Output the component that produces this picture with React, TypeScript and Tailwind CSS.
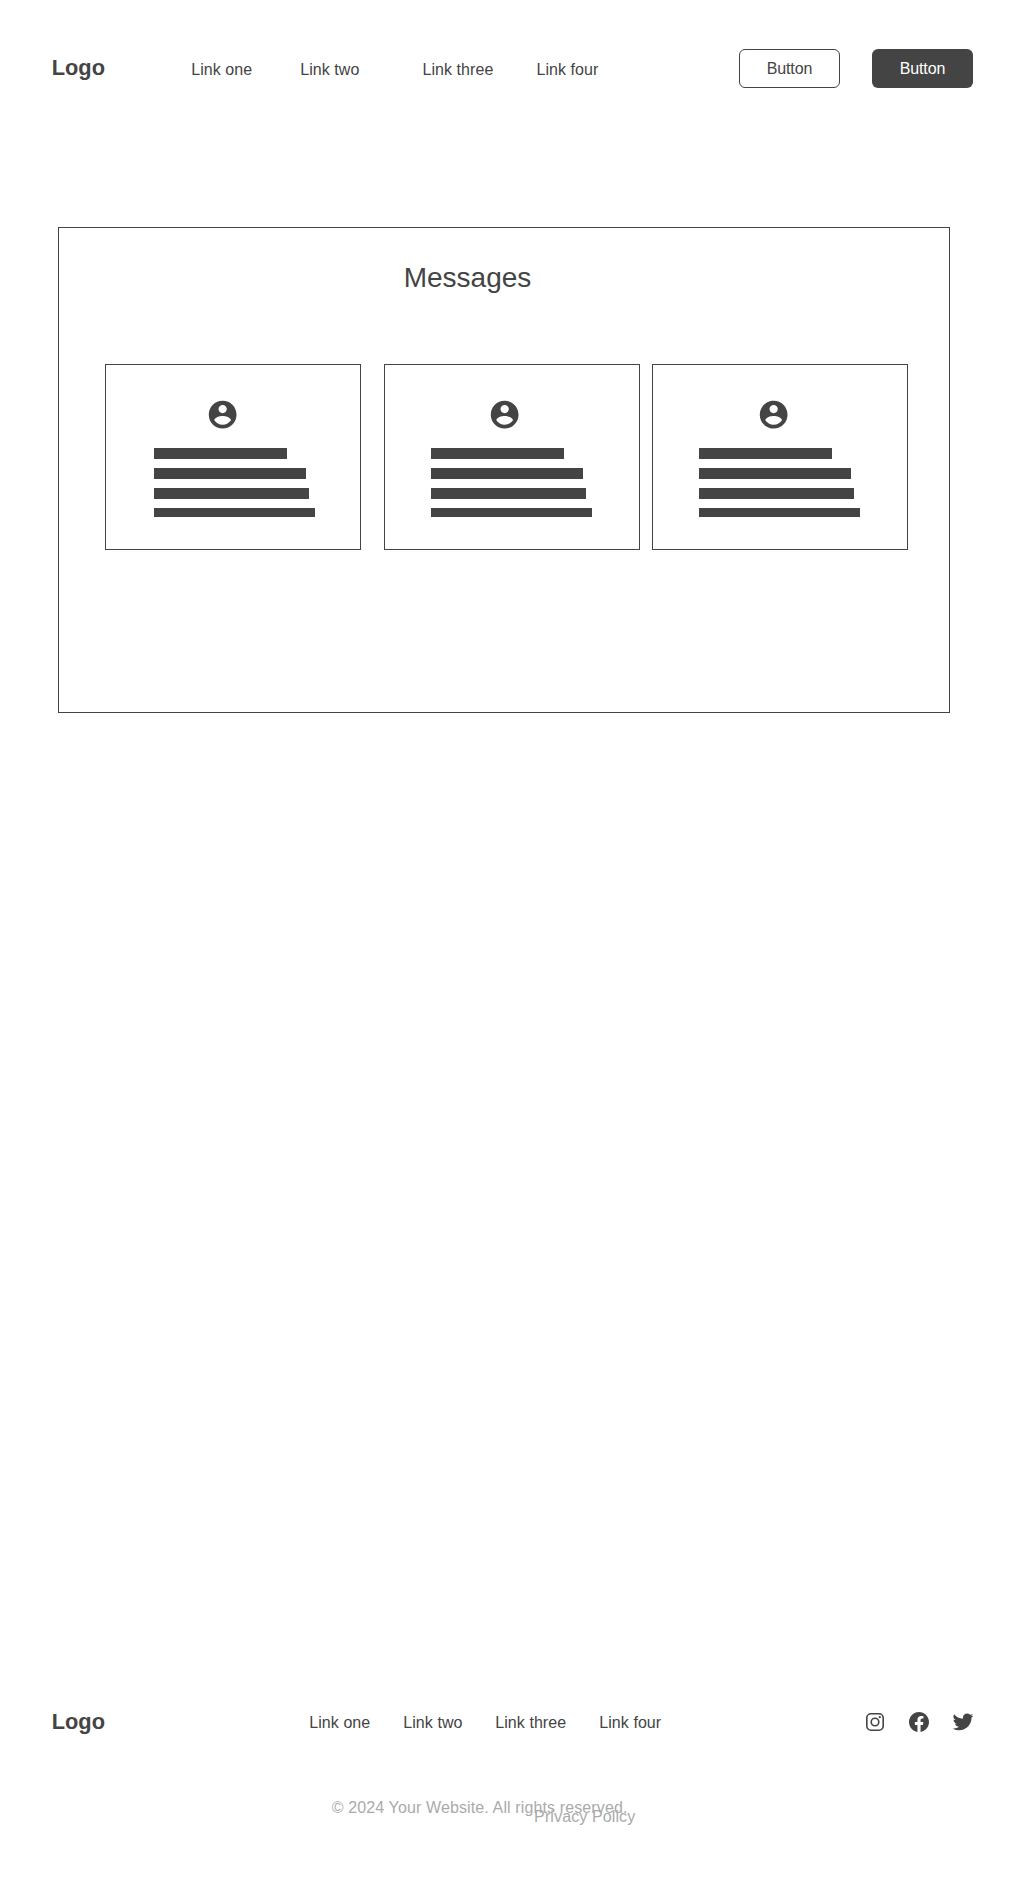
import React from "react";

function Avatar({ className }: { className: string }) {
  return (
    <svg viewBox="0 0 24 24" fill="currentColor" className={`size-[33.3px] ${className}`}>
      <path d="M12 2C6.48 2 2 6.48 2 12s4.48 10 10 10 10-4.48 10-10S17.52 2 12 2zm0 3c1.66 0 3 1.34 3 3s-1.34 3-3 3-3-1.34-3-3 1.34-3 3-3zm0 14.2c-2.5 0-4.71-1.28-6-3.22.03-1.99 4-3.08 6-3.08 1.99 0 5.97 1.09 6 3.08-1.29 1.94-3.5 3.22-6 3.22z" />
    </svg>
  );
}

function MessageCard({ className, avatar, lines }: { className: string; avatar: string; lines: string }) {
  return (
    <article className={`h-[186px] w-64 shrink-0 border border-[#444] pt-[32.7px] ${className}`}>
      <Avatar className={avatar} />
      <div className={`mt-[17px] flex flex-col gap-[9px] ${lines}`}>
        <div className="h-[11px] w-[133px] bg-[#444]" />
        <div className="h-[11px] w-[152px] bg-[#444]" />
        <div className="h-[11px] w-[155px] bg-[#444]" />
        <div className="h-[9px] w-[161px] bg-[#444]" />
      </div>
    </article>
  );
}

export default function App() {
  return (
    <div className="flex h-[1877px] w-[1024px] flex-col overflow-hidden bg-white font-['Liberation_Sans',Arial,sans-serif] text-base text-[#444]">
      <header className="flex h-[137px] items-start pl-[51.7px] pt-[49px]">
        <a className="mt-[3px] w-[139.5px] text-[21.8px] leading-8 font-bold">Logo</a>
        <nav className="mt-[9px] flex leading-6 tracking-[0.06px]">
          <a className="w-[109px]">Link one</a>
          <a className="w-[122.3px]">Link two</a>
          <a className="w-[114px]">Link three</a>
          <a className="w-[202.5px]">Link four</a>
        </nav>
        <button className="h-[39px] w-[101px] rounded-md border border-[#444] tracking-[-0.1px]">Button</button>
        <button className="ml-8 h-[39px] w-[101px] rounded-md bg-[#444] tracking-[-0.1px] text-white">Button</button>
      </header>

      <main className="mt-[90px] ml-[58px] h-[486px] w-[892px] border border-[#444] pt-8">
        <h1 className="ml-[344.7px] text-[28px] leading-9">Messages</h1>
        <div className="mt-[68px] ml-[46px] flex">
          <MessageCard className="" avatar="ml-[99.7px]" lines="ml-12" />
          <MessageCard className="ml-[23px]" avatar="ml-[102.9px]" lines="ml-[46px]" />
          <MessageCard className="ml-3" avatar="ml-[103.8px]" lines="ml-[46px]" />
        </div>
      </main>

      <footer className="mt-auto h-[177px]">
        <div className="flex items-start pl-[51.7px]">
          <a className="mt-1.5 w-[257.6px] text-[21.8px] leading-8 font-bold">Logo</a>
          <nav className="mt-[11px] flex leading-6 tracking-[0.06px]">
            <a className="w-[94px]">Link one</a>
            <a className="w-[92px]">Link two</a>
            <a className="w-[104px]">Link three</a>
            <a className="w-[263.7px]">Link four</a>
          </nav>
          <div className="mt-2.5 flex gap-5">
            <svg viewBox="0 0 24 24" fill="currentColor" className="size-6">
              <path fillRule="evenodd" d="M8 3h8a5 5 0 0 1 5 5v8a5 5 0 0 1-5 5H8a5 5 0 0 1-5-5V8a5 5 0 0 1 5-5Zm0 1.6A3.4 3.4 0 0 0 4.6 8v8A3.4 3.4 0 0 0 8 19.4h8a3.4 3.4 0 0 0 3.4-3.4V8A3.4 3.4 0 0 0 16 4.6H8Z" />
              <circle cx="12" cy="12" r="3.8" fill="none" stroke="currentColor" strokeWidth="1.6" />
              <circle cx="16.8" cy="7.2" r="1.1" />
            </svg>
            <svg viewBox="0 0 24 24" fill="currentColor" className="size-6">
              <path d="M22 12.06C22 6.5 17.52 2 12 2S2 6.5 2 12.06c0 5.02 3.66 9.18 8.44 9.94v-7.03H7.9v-2.91h2.54V9.85c0-2.52 1.49-3.91 3.78-3.91 1.09 0 2.24.2 2.24.2v2.47H15.2c-1.24 0-1.63.78-1.63 1.57v1.88h2.77l-.44 2.91h-2.33V22C18.34 21.24 22 17.08 22 12.06Z" />
            </svg>
            <svg viewBox="0 0.6 24 24" fill="currentColor" className="size-6">
              <path d="M22.46 6c-.77.35-1.6.58-2.46.69.88-.53 1.56-1.37 1.88-2.38-.83.5-1.75.85-2.72 1.05a4.28 4.28 0 0 0-7.32 2.92c0 .34.04.67.11.98C8.38 9.09 5.23 7.38 3.13 4.79a4.28 4.28 0 0 0 1.34 5.73 4.2 4.2 0 0 1-1.95-.53v.05a4.29 4.29 0 0 0 3.45 4.2 4.2 4.2 0 0 1-1.94.07 4.28 4.28 0 0 0 4 2.98A8.52 8.52 0 0 1 1.71 19a12.1 12.1 0 0 0 6.58 1.92c7.88 0 12.21-6.54 12.21-12.21 0-.19 0-.37-.01-.56.84-.6 1.56-1.36 1.97-2.15Z" />
            </svg>
          </div>
        </div>
        <div className="ml-[331.8px] mt-[58px] flex items-start whitespace-nowrap leading-6 tracking-[0.12px] text-[#aaa]">
          <p className="w-[202.3px]">© 2024 Your Website. All rights reserved.</p>
          <a className="mt-[9px]">Privacy Policy</a>
        </div>
      </footer>
    </div>
  );
}
